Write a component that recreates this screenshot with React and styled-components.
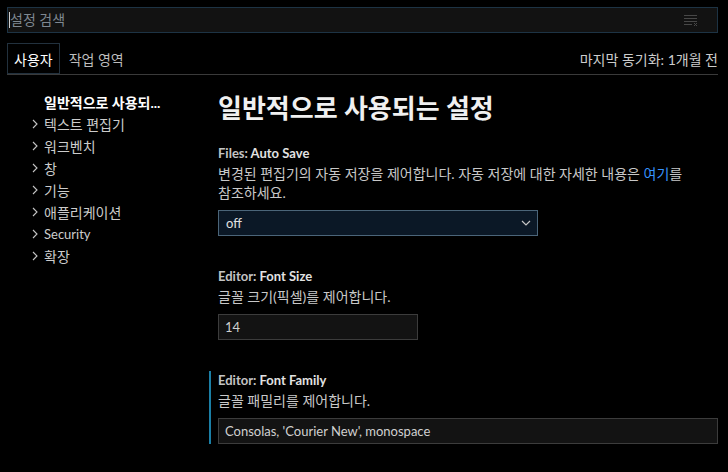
import React from 'react';
import styled, { createGlobalStyle } from 'styled-components';

const GlobalStyle = createGlobalStyle`
  html, body {
    margin: 0;
    background: #000;
  }
  body {
    width: 728px;
    height: 472px;
    overflow: hidden;
    font-family: Lato, "Noto Sans CJK KR", sans-serif;
    font-size: 14px;
    color: #cccccc;
    word-break: keep-all;
  }
  * { box-sizing: border-box; }
`;

const Page = styled.div`
  padding: 7px 10px 0 7px;
  height: 472px;
  display: flex;
  flex-direction: column;
`;

const SearchBar = styled.div`
  height: 26px;
  background: #121212;
  border: 1px solid #1d3344;
  display: flex;
  align-items: center;
  padding: 0 18px 0 1px;
`;

const Caret = styled.span`
  width: 1px;
  height: 16px;
  background: #d0d0d0;
`;

const Placeholder = styled.span`
  flex: 1;
  color: #7f8891;
  line-height: 24px;
`;

const TabBar = styled.div`
  margin-top: 10px;
  height: 32px;
  display: flex;
  align-items: flex-start;
  border-bottom: 1px solid #3a3a3a;
`;

const Tab = styled.div`
  height: 31px;
  padding: 0 6px;
  display: flex;
  align-items: center;
  border: 1px solid ${p => (p.$active ? '#22313e' : 'transparent')};
  color: ${p => (p.$active ? '#ffffff' : '#bdbdbd')};
  margin-right: 2px;
`;

const SyncStatus = styled.div`
  margin-left: auto;
  height: 31px;
  display: flex;
  align-items: center;
  color: #cccccc;
`;

const Body = styled.div`
  display: flex;
  flex: 1;
`;

const Nav = styled.div`
  width: 202px;
  padding-top: 16px;
  display: flex;
  flex-direction: column;
`;

const NavRow = styled.div`
  height: 22px;
  display: flex;
  align-items: center;
  padding-left: ${p => (p.$root ? '37px' : '24px')};
  color: ${p => (p.$root ? '#ffffff' : '#cccccc')};
  font-weight: ${p => (p.$root ? 700 : 400)};
  font-size: ${p => (p.$latin ? '13px' : '14px')};
`;

const Chevron = styled.span`
  width: 13px;
  display: flex;
  align-items: center;
  color: #c5c5c5;
`;

const Content = styled.div`
  flex: 1;
  padding-top: 17px;
`;

const Title = styled.h1`
  margin: 0 0 20px;
  padding-left: 9px;
  font-size: 26px;
  line-height: 32px;
  font-weight: 700;
  color: #f0f0f0;
`;

const Item = styled.div`
  border-left: 2px solid ${p => (p.$focused ? '#1b7fa6' : 'transparent')};
  padding-left: 7px;
  margin-bottom: 31px;
`;

const Label = styled.div`
  font-size: 13px;
  line-height: 18px;
  font-weight: 700;
  color: #e2e2e2;
`;

const Category = styled.span`
  color: #c4c4c4;
`;

const Description = styled.div`
  margin-top: 2px;
  line-height: 19px;
  color: #c8c8c8;
`;

const Link = styled.span`
  color: #3794ff;
`;

const Select = styled.div`
  margin-top: 8px;
  width: 320px;
  height: 26px;
  background: #0b1826;
  border: 1px solid #4b6579;
  display: flex;
  align-items: center;
  padding: 0 5px 0 7px;
  font-size: 13px;
  color: #e0e0e0;
  span { flex: 1; }
`;

const TextInput = styled.div`
  margin-top: 8px;
  width: ${p => p.$width};
  height: 26px;
  background: #131313;
  border: 1px solid #3c3c3c;
  display: flex;
  align-items: center;
  padding-left: 6px;
  font-size: 13px;
  color: #d0d0d0;
`;

const FilterIcon = () => (
  <svg width="16" height="16" viewBox="0 0 16 16" fill="none" stroke="#474747" strokeWidth="1">
    <path d="M1 3.5h13M1 6.5h13M1 9.5h13M1 12.5h8" />
    <path d="M11 11l3 3M14 11l-3 3" />
  </svg>
);

const ChevronRight = () => (
  <svg width="8" height="10" viewBox="0 0 8 10" fill="none" stroke="currentColor" strokeWidth="1.1">
    <path d="M2 1l4 4-4 4" />
  </svg>
);

const ChevronDown = () => (
  <svg width="12" height="8" viewBox="0 0 12 8" fill="none" stroke="#c5c5c5" strokeWidth="1.2">
    <path d="M2 2l4 4 4-4" />
  </svg>
);

const navItems = ['텍스트 편집기', '워크벤치', '창', '기능', '애플리케이션', 'Security', '확장'];

export default function App() {
  return (
    <>
      <GlobalStyle />
      <Page>
        <SearchBar>
          <Caret />
          <Placeholder>설정 검색</Placeholder>
          <FilterIcon />
        </SearchBar>

        <TabBar>
          <Tab $active>사용자</Tab>
          <Tab>작업 영역</Tab>
          <SyncStatus>마지막 동기화: 1개월 전</SyncStatus>
        </TabBar>

        <Body>
          <Nav>
            <NavRow $root>일반적으로 사용되...</NavRow>
            {navItems.map(name => (
              <NavRow key={name} $latin={name === 'Security'}>
                <Chevron><ChevronRight /></Chevron>
                {name}
              </NavRow>
            ))}
          </Nav>

          <Content>
            <Title>일반적으로 사용되는 설정</Title>

            <Item>
              <Label><Category>Files: </Category>Auto Save</Label>
              <Description>
                변경된 편집기의 자동 저장을 제어합니다. 자동 저장에 대한 자세한 내용은 <Link>여기</Link>를 참조하세요.
              </Description>
              <Select>
                <span>off</span>
                <ChevronDown />
              </Select>
            </Item>

            <Item>
              <Label><Category>Editor: </Category>Font Size</Label>
              <Description>글꼴 크기(픽셀)를 제어합니다.</Description>
              <TextInput $width="200px">14</TextInput>
            </Item>

            <Item $focused>
              <Label><Category>Editor: </Category>Font Family</Label>
              <Description>글꼴 패밀리를 제어합니다.</Description>
              <TextInput $width="100%">Consolas, 'Courier New', monospace</TextInput>
            </Item>
          </Content>
        </Body>
      </Page>
    </>
  );
}
